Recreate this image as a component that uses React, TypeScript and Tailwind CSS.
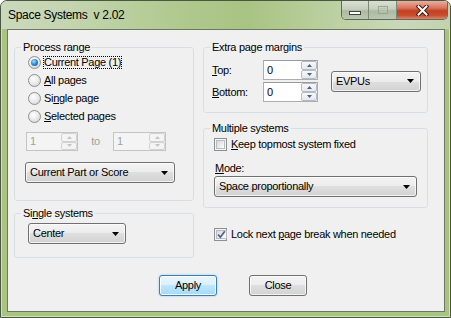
import React from "react";

const FONT = "font-['Liberation_Sans',Arial,sans-serif] text-[11px] tracking-[-0.3px] text-black";

function Radio({ checked }: { checked?: boolean }) {
  return (
    <span className="w-[13px] h-[13px] rounded-full border border-[#8e8f8f] bg-[radial-gradient(circle_at_40%_35%,#ffffff_0%,#ececec_45%,#cdcdcd_100%)] flex items-center justify-center shrink-0">
      {checked && (
        <span className="w-[7px] h-[7px] rounded-full bg-[radial-gradient(circle_at_40%_35%,#a6e0ff_0%,#2f8fd8_45%,#0c4d8a_100%)]" />
      )}
    </span>
  );
}

function Check({ checked }: { checked?: boolean }) {
  return (
    <span className="w-[13px] h-[13px] border border-[#8e8f8f] bg-[#f4f4f4] p-[1px] flex shrink-0">
      <span className="flex-1 border border-[#b8bcc2] bg-[linear-gradient(135deg,#d4d7dc_0%,#f1f2f3_70%,#ffffff_100%)] flex items-center justify-center">
        {checked && (
          <svg width="9" height="9" viewBox="0 0 9 9">
            <path d="M1.2 4.6 L3.4 7.2 L7.8 1.2" fill="none" stroke="#4b5f98" strokeWidth="1.7" />
          </svg>
        )}
      </span>
    </span>
  );
}

function Arrow({ up, color }: { up?: boolean; color: string }) {
  return (
    <svg width="5" height="3" viewBox="0 0 5 3">
      <path d={up ? "M0 3H5L2.5 0Z" : "M0 0H5L2.5 3Z"} fill={color} />
    </svg>
  );
}

function Spin({ value, disabled, w, h }: { value: string; disabled?: boolean; w: string; h: string }) {
  const btn = disabled
    ? "border-[#d2d2d2] bg-[#f4f4f4]"
    : "border-[#b7babf] bg-[linear-gradient(180deg,#f7f8fa_0%,#e4e8ee_100%)]";
  const ac = disabled ? "#c4c4c4" : "#4d6185";
  return (
    <div
      className={`flex ${w} ${h} border ${
        disabled ? "border-[#c4c4c4] bg-[#f4f4f4]" : "border-[#abadb3] border-t-[#9a9ca2] bg-white"
      }`}
    >
      <div className={`flex-1 pl-[3px] flex items-center ${disabled ? "text-[#a0a0a0]" : ""}`}>{value}</div>
      <div className="w-[16px] flex flex-col">
        <div className={`flex-1 border rounded-[2px] flex items-center justify-center ${btn}`}>
          <Arrow up color={ac} />
        </div>
        <div className={`flex-1 border rounded-[2px] flex items-center justify-center ${btn}`}>
          <Arrow color={ac} />
        </div>
      </div>
    </div>
  );
}

function Combo({ text, w }: { text: string; w: string }) {
  return (
    <div
      className={`h-[21px] ${w} border border-[#707070] rounded-[3px] bg-[linear-gradient(180deg,#f3f3f3_0%,#ececec_50%,#dfdfdf_50%,#d2d2d2_100%)] shadow-[inset_0_0_0_1px_rgba(255,255,255,0.7)] flex items-center pl-[4px] pr-[6px]`}
    >
      <span className="flex-1 whitespace-nowrap">{text}</span>
      <svg width="7" height="4" viewBox="0 0 7 4">
        <path d="M0 0H7L3.5 4Z" fill="#000" />
      </svg>
    </div>
  );
}

function Group({ title, children, className = "" }: { title: React.ReactNode; children: React.ReactNode; className?: string }) {
  return (
    <fieldset className={`border border-[#d5dfe5] rounded-[3px] ${className}`}>
      <legend className="ml-[6px] px-[2px] leading-[12px]">{title}</legend>
      {children}
    </fieldset>
  );
}

function Btn({ text, def }: { text: string; def?: boolean }) {
  return (
    <div
      className={`w-[58px] h-[21px] rounded-[3px] border flex items-center justify-center ${
        def
          ? "border-[#3c7fb1] bg-[linear-gradient(180deg,#eaf6fd_0%,#d9f0fc_50%,#bee6fd_50%,#a7d9f5_100%)] shadow-[inset_0_0_0_1px_rgba(255,255,255,0.8),0_0_2px_#7fc0ef]"
          : "border-[#707070] bg-[linear-gradient(180deg,#f3f3f3_0%,#ececec_50%,#dfdfdf_50%,#d2d2d2_100%)] shadow-[inset_0_0_0_1px_rgba(255,255,255,0.7)]"
      }`}
    >
      {text}
    </div>
  );
}

export default function App() {
  return (
    <div className={`w-[451px] h-[318px] bg-white ${FONT}`}>
      <div className="w-[451px] h-[318px] flex flex-col border border-[#4a5842] rounded-t-[7px] bg-[#a9c381] shadow-[inset_0_0_0_1px_rgba(255,255,255,0.45)] overflow-hidden">
        {/* title bar */}
        <div className="h-[28px] flex items-start justify-between pl-[7px] pr-[2px] bg-[linear-gradient(90deg,#cbd9bc_0%,#c4d5b0_15%,#afc98e_40%,#a8c484_55%,#bdd1a3_75%,#cad8ba_90%,#c2d2ad_100%)]">
          <div className="pt-[7px] leading-[14px] text-[12px] tracking-[-0.3px] whitespace-pre text-black">
            {"Space Systems  v 2.02"}
          </div>
          <div className="flex h-[19px] border border-t-0 border-[#5f6a58] rounded-b-[5px] overflow-hidden">
            <div className="w-[27px] flex items-center justify-center border-r border-[#7d8876] bg-[linear-gradient(180deg,#d9e0d3_0%,#c5cfbd_45%,#aeb9a4_55%,#bcc7b1_100%)]">
              <span className="mt-[5px] w-[12px] h-[4px] bg-white border border-[#3c4536]" />
            </div>
            <div className="w-[28px] flex items-center justify-center border-r border-[#7d8876] bg-[linear-gradient(180deg,#d9e0d3_0%,#c5cfbd_45%,#aeb9a4_55%,#bcc7b1_100%)]">
              <span className="w-[10px] h-[8px] border border-[#9aa594] flex items-center justify-center">
                <span className="w-[6px] h-[4px] border border-[#b9c3b3]" />
              </span>
            </div>
            <div className="w-[50px] flex items-center justify-center bg-[linear-gradient(180deg,#eab0a0_0%,#d8705a_40%,#c3401f_55%,#c94e30_80%,#dc8670_100%)]">
              <svg width="13" height="11" viewBox="0 0 13 11">
                <path d="M2.5 1.5 L10.5 9.5 M10.5 1.5 L2.5 9.5" stroke="#3b1a12" strokeWidth="4" strokeLinecap="square" />
                <path d="M2.5 1.5 L10.5 9.5 M10.5 1.5 L2.5 9.5" stroke="#ffffff" strokeWidth="2" strokeLinecap="square" />
              </svg>
            </div>
          </div>
        </div>

        {/* client area */}
        <div className="ml-[6px] mr-[5px] h-[283px] border border-[#6b7864] bg-[#f0f0f0] pt-[11px] pl-[6px] flex flex-col">
          <div className="flex gap-[9px] items-start">
            {/* left column */}
            <div className="w-[180px] flex flex-col">
              <Group title="Process range">
                <div className="pb-[17px]">
                  <div className="pl-[13px] flex flex-col">
                    <div className="h-[18px] flex items-center gap-[3px]">
                      <Radio checked />
                      <span className="-ml-[1px] border border-dotted border-black leading-[11px] px-0">Current Page (1)</span>
                    </div>
                    <div className="h-[18px] flex items-center gap-[3px]">
                      <Radio />
                      <span><u>A</u>ll pages</span>
                    </div>
                    <div className="h-[18px] flex items-center gap-[3px]">
                      <Radio />
                      <span>Si<u>n</u>gle page</span>
                    </div>
                    <div className="h-[18px] flex items-center gap-[3px]">
                      <Radio />
                      <span><u>S</u>elected pages</span>
                    </div>
                  </div>
                  <div className="mt-[7px] ml-[11px] flex items-center">
                    <Spin value="1" disabled w="w-[52px]" h="h-[19px]" />
                    <span className="w-[35px] text-center text-[#a0a0a0]">to</span>
                    <Spin value="1" disabled w="w-[53px]" h="h-[19px]" />
                  </div>
                  <div className="mt-[11px] ml-[10px]">
                    <Combo text="Current Part or Score" w="w-[150px]" />
                  </div>
                </div>
              </Group>
              <Group title={<span>Si<u>n</u>gle systems</span>} className="mt-[6px]">
                <div className="pt-[4px] pb-[13px] pl-[13px]">
                  <Combo text="Center" w="w-[98px]" />
                </div>
              </Group>
            </div>

            {/* right column */}
            <div className="w-[225px] flex flex-col">
              <Group title="Extra page margins">
                <div className="pt-[7px] pb-[10px] pl-[8px] flex items-center">
                  <div className="flex flex-col gap-[2px]">
                    <div className="flex items-center">
                      <span className="w-[51px]"><u>T</u>op:</span>
                      <Spin value="0" w="w-[55px]" h="h-[20px]" />
                    </div>
                    <div className="flex items-center">
                      <span className="w-[51px]"><u>B</u>ottom:</span>
                      <Spin value="0" w="w-[55px]" h="h-[20px]" />
                    </div>
                  </div>
                  <div className="ml-[13px]">
                    <Combo text="EVPUs" w="w-[90px]" />
                  </div>
                </div>
              </Group>
              <Group title="Multiple systems" className="mt-[9px]">
                <div className="pt-[4px] pb-[10px] pl-[10px]">
                  <div className="h-[13px] flex items-center gap-[4px]">
                    <Check />
                    <span><u>K</u>eep topmost system fixed</span>
                  </div>
                  <div className="mt-[11px] leading-[12px] ml-[1px]">
                    <u>M</u>ode:
                  </div>
                  <div className="mt-[2px]">
                    <Combo text="Space proportionally" w="w-[203px]" />
                  </div>
                </div>
              </Group>
              <div className="mt-[20px] pl-[11px] h-[13px] flex items-center gap-[4px]">
                <Check checked />
                <span>Lock next <u>p</u>age break when needed</span>
              </div>
            </div>
          </div>

          <div className="mt-[17px] pl-[145px] flex gap-[32px]">
            <Btn text="Apply" def />
            <Btn text="Close" />
          </div>
        </div>
      </div>
    </div>
  );
}
